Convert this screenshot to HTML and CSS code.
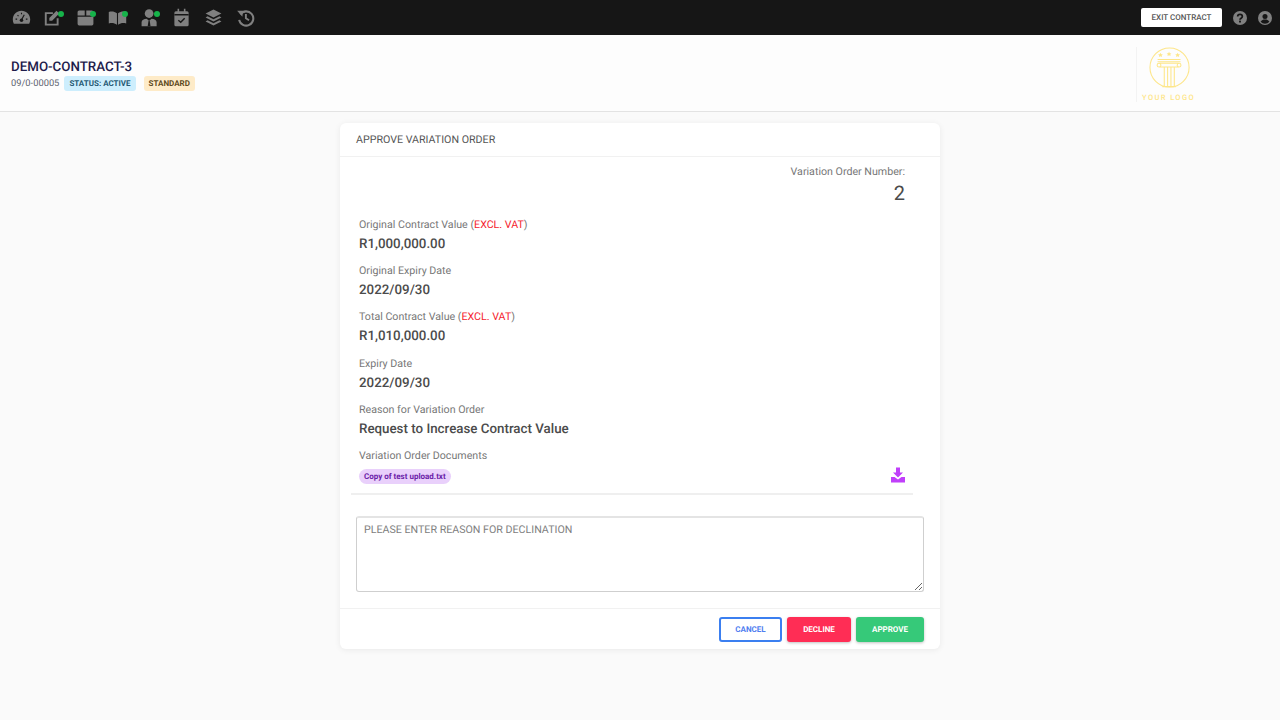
FILE: index.html
```html
<!DOCTYPE html>
<html lang="en">
<head>
<meta charset="utf-8">
<title>Approve Variation Order</title>
<link rel="stylesheet" href="styles.css">
</head>
<body>
<header class="topbar">
  <nav class="nav-icons">
    <span class="nav-icon"><svg viewBox="0 0 24 24" width="19" height="19"><path fill="#808080" d="M12 3.500C5.900 3.500 1 8.400 1 14.500c0 2 .5 3.700 1.300 5.500h19.400c.8-1.800 1.300-3.500 1.300-5.500 0-6.100-4.900-11-11-11z"/><path stroke="#161616" stroke-width="1.400" fill="none" d="M12 15l3.500-6.500M4.500 14h2M17.500 14h2M7 9l1.200 1.200M12 6v2"/><circle cx="12" cy="15.500" r="2.200" fill="#161616"/></svg></span>
    <span class="nav-icon dot"><svg class="shift" viewBox="0 0 24 24" width="19" height="19"><path fill="none" stroke="#808080" stroke-width="2.400" d="M18.500 13v8H3.500V6.500h9"/><path fill="#808080" d="M8 12.500L17 3.500l3.500 3.500-9 9H8z"/></svg></span>
    <span class="nav-icon dot"><svg viewBox="0 0 24 24" width="19" height="19"><path fill="#808080" d="M2 5a2 2 0 0 1 2-2h7v6.500H2zM13 3h7a2 2 0 0 1 2 2v4.500h-9zM2 11h20v9a2 2 0 0 1-2 2H4a2 2 0 0 1-2-2z"/></svg></span>
    <span class="nav-icon dot"><svg viewBox="0 0 24 24" width="19" height="19"><path fill="#808080" d="M1 5c4-1 7-.5 10.300 1.500V21C8 19 5 18.500 1 19.500zM12.700 6.500C16 4.500 19 4 23 5v14.500c-4-1-7-.5-10.300 1.500z"/></svg></span>
    <span class="nav-icon dot"><svg viewBox="0 0 24 24" width="19" height="19"><circle cx="11.500" cy="7" r="5.500" fill="#808080"/><path fill="#808080" d="M2 23v-5c0-3 3-4.500 6.500-4.500l3 3 3-3c3.500 0 6.500 1.500 6.500 4.500v5z"/><path fill="#161616" d="M10.700 16.500h1.600l1 6.500h-3.600z"/></svg></span>
    <span class="nav-icon"><svg viewBox="0 0 24 24" width="19" height="19"><path fill="#808080" d="M7 1h2v3h6V1h2v3h2a2 2 0 0 1 2 2v15a2 2 0 0 1-2 2H5a2 2 0 0 1-2-2V6a2 2 0 0 1 2-2h2z"/><path stroke="#161616" stroke-width="1.800" fill="none" d="M3 8.500h18M8 15.500l3 2.500 5-5"/></svg></span>
    <span class="nav-icon"><svg viewBox="0 0 24 24" width="19" height="19"><path fill="#808080" d="M12 2l10 5-10 5L2 7zM4.500 10.500L12 14.300l7.500-3.800L22 12l-10 5-10-5zM4.500 15.500L12 19.300l7.500-3.800L22 17l-10 5-10-5z"/></svg></span>
    <span class="nav-icon"><svg viewBox="0 0 24 24" width="19" height="19"><path fill="none" stroke="#808080" stroke-width="2.600" d="M5.500 8a9 9 0 1 1-1.500 7"/><path fill="#808080" d="M1.500 3.500l7.500 0-1 7.500z"/><path fill="none" stroke="#808080" stroke-width="2.400" d="M12.500 7.500V13l4 2.500"/></svg></span>
  </nav>
  <div class="top-actions">
    <button class="exit-btn" type="button">EXIT CONTRACT</button>
    <svg class="round-icon" viewBox="0 0 24 24" width="14" height="14"><circle cx="12" cy="12" r="12" fill="#808080"/><path fill="none" stroke="#161616" stroke-width="3" d="M8 9.500C8 7 10 5.800 12 5.800s4 1.200 4 3.500c0 3-4 3-4 5.700"/><rect x="10.400" y="16.500" width="3.200" height="3.200" fill="#161616"/></svg>
    <svg class="round-icon" viewBox="0 0 24 24" width="14" height="14"><circle cx="12" cy="12" r="12" fill="#808080"/><circle cx="12" cy="9.500" r="4.300" fill="#161616"/><path fill="#161616" d="M4.500 18.500c1.500-3 4.500-4 7.500-4s6 1 7.500 4a10 10 0 0 1-15 0z"/></svg>
  </div>
</header>

<section class="contract-head">
  <div class="contract-info">
    <h1 class="contract-title">DEMO-CONTRACT-3</h1>
    <div class="contract-meta">
      <span class="contract-no">09/0-00005</span>
      <span class="tag tag-blue">STATUS: ACTIVE</span>
      <span class="tag tag-amber">STANDARD</span>
    </div>
  </div>
  <div class="logo">
    <svg viewBox="0 0 44 44" width="44" height="44" fill="none" stroke="#fde68a" stroke-width="1.100">
      <circle cx="21.500" cy="21.500" r="20.500"/>
      <path d="M9 13h24M9 15.500h24M11 17h20M11 21h20M14 41.500h14"/>
      <circle cx="10.500" cy="19" r="2"/>
      <circle cx="31.500" cy="19" r="2"/>
      <path d="M16 21v20M19.500 21v20M23 21v20M26.500 21v20"/>
      <path fill="#fde68a" stroke="none" d="M12 6l.8 1.500 1.700.2-1.200 1.100.3 1.700-1.600-.8-1.600.8.300-1.700-1.200-1.100 1.700-.2zM21 5l.8 1.500 1.700.2-1.200 1.100.3 1.700-1.600-.8-1.600.8.300-1.700-1.200-1.100 1.700-.2zM30 6l.8 1.500 1.700.2-1.200 1.100.3 1.700-1.600-.8-1.600.8.300-1.700-1.200-1.100 1.700-.2z"/>
    </svg>
    <span class="logo-text">YOUR LOGO</span>
  </div>
</section>

<main class="page">
  <article class="card">
    <header class="card-head">APPROVE VARIATION ORDER</header>
    <div class="card-body">
      <div class="vo-number">
        <span class="vo-label">Variation Order Number:</span>
        <span class="vo-value">2</span>
      </div>
      <div class="fields">
        <div class="field">
          <span class="label">Original Contract Value (<span class="red">EXCL. VAT</span>)</span>
          <span class="value">R1,000,000.00</span>
        </div>
        <div class="field">
          <span class="label">Original Expiry Date</span>
          <span class="value">2022/09/30</span>
        </div>
        <div class="field">
          <span class="label">Total Contract Value (<span class="red">EXCL. VAT</span>)</span>
          <span class="value">R1,010,000.00</span>
        </div>
        <div class="field">
          <span class="label">Expiry Date</span>
          <span class="value">2022/09/30</span>
        </div>
        <div class="field">
          <span class="label">Reason for Variation Order</span>
          <span class="value value-lg">Request to Increase Contract Value</span>
        </div>
        <div class="field docs">
          <span class="label">Variation Order Documents</span>
          <div class="doc-row">
            <span class="doc-pill">Copy of test upload.txt</span>
            <svg class="doc-icon" viewBox="0 0 16 16" width="16" height="16"><path fill="#c03ffa" d="M6 0.500h4v5h3l-5 5-5-5h3zM1 10h3.500l3.500 2.500 3.500-2.500H15v5.500H1z"/></svg>
          </div>
        </div>
      </div>
      <textarea class="reason" placeholder="PLEASE ENTER REASON FOR DECLINATION"></textarea>
    </div>
    <footer class="card-foot">
      <button class="btn btn-cancel" type="button">CANCEL</button>
      <button class="btn btn-decline" type="button">DECLINE</button>
      <button class="btn btn-approve" type="button">APPROVE</button>
    </footer>
  </article>
</main>
</body>
</html>
```
FILE: styles.css
```css
* { box-sizing: border-box; }
html, body { height: 100%; }
body {
  margin: 0;
  background: #fafafa;
  font-family: Roboto, "Liberation Sans", sans-serif;
  color: #4b4b4b;
  overflow: hidden;
  text-rendering: geometricPrecision;
}
.topbar {
  height: 35px;
  background: #161616;
  display: flex;
  align-items: center;
  justify-content: space-between;
  padding: 0 8px 0 11px;
  box-shadow: 0 1px 3px rgba(0,0,0,.2);
}
.nav-icons { display: flex; gap: 12px; align-items: center; }
.nav-icon {
  position: relative;
  width: 20px;
  height: 20px;
  display: flex;
  align-items: center;
  justify-content: center;
}
.nav-icon svg { display: block; }
.nav-icon svg.shift { margin-left: -2px; }
.nav-icon.dot::after {
  content: "";
  position: absolute;
  top: 3px;
  right: -1px;
  width: 6px;
  height: 6px;
  border-radius: 50%;
  background: #16b34a;
}
.top-actions { display: flex; align-items: center; gap: 11px; }
.exit-btn {
  width: 81px;
  height: 19px;
  padding: 0;
  border: 0;
  border-radius: 2px;
  background: #fff;
  color: #555;
  font: 500 8px Roboto, sans-serif;
  text-rendering: geometricPrecision;
}
.round-icon { display: block; }
.contract-head {
  height: 77px;
  background: #fdfdfd;
  border-bottom: 1px solid #e3e3e3;
  display: flex;
  justify-content: space-between;
  padding: 0 84px 0 11px;
}
.contract-title {
  margin: 25px 0 0;
  font-size: 13.330px;
  line-height: 16px;
  font-weight: 500;
  color: #1e1b4b;
}
.contract-meta { display: flex; align-items: center; gap: 5px; }
.contract-no { font-size: 9.330px; color: #5f6472; }
.tag {
  font-size: 8px;
  font-weight: 700;
  height: 15px;
  line-height: 15px;
  padding: 0 5px;
  border-radius: 3px;
}
.tag + .tag { margin-left: 3px; }
.tag-blue { background: #cdeefd; color: #265a74; }
.tag-amber { background: #feebc8; color: #5f4a20; }
.logo {
  margin-top: 12px;
  height: 55px;
  border-left: 1px solid #f3f3f3;
  padding-left: 11px;
  width: 60px;
  display: flex;
  flex-direction: column;
  align-items: flex-start;
}
.logo-text {
  margin: 4px 0 0 -6px;
  font-size: 7.500px;
  font-weight: 500;
  letter-spacing: 1.400px;
  color: #fde68a;
  white-space: nowrap;
}
.page { display: flex; justify-content: center; padding-top: 11px; }
.card {
  width: 600px;
  height: 526px;
  background: #fff;
  border-radius: 6px;
  box-shadow: 0 1px 6px rgba(0,0,0,.07);
  display: flex;
  flex-direction: column;
}
.card-head {
  height: 34px;
  padding: 10px 16px 0;
  font-size: 10.670px;
  line-height: 14px;
  color: #555;
  border-bottom: 1px solid #f1f1f1;
}
.card-body { flex: 1; padding: 8px 16px 0; display: flex; flex-direction: column; }
.vo-number {
  display: flex;
  flex-direction: column;
  align-items: flex-end;
  padding-right: 19px;
}
.vo-label { font-size: 10.670px; line-height: 14px; color: #777; }
.vo-value { font-size: 20px; line-height: 24px; margin-top: 2px; color: #4b4b4b; }
.fields {
  margin: 12.500px 11px 0 -5px;
  padding: 0 8px;
  border-bottom: 2px solid #efefef;
  height: 277.500px;
}
.field { display: flex; flex-direction: column; height: 46.400px; }
.label { font-size: 10.670px; line-height: 14px; color: #777; }
.red { color: #f5222d; }
.value { font-size: 13.330px; line-height: 16px; margin-top: 5px; font-weight: 500; color: #4b4b4b; }
.value-lg { margin-top: 4.500px; }
.doc-row { display: flex; justify-content: space-between; align-items: center; margin: 6px -1px 0 0; }
.doc-pill {
  font-size: 8px;
  font-weight: 700;
  line-height: 15px;
  padding: 0 5px;
  border-radius: 8px;
  background: #e9d0fb;
  color: #6b21a8;
}
.doc-icon { display: block; margin-top: -3px; }
.reason {
  display: block;
  margin: 21px 0 0;
  width: 568px;
  height: 76px;
  padding: 5px 7px;
  border: 1px solid #cfcfcf;
  border-top: 2px solid #e4e4e4;
  border-radius: 3px;
  font: 400 10.670px/14px Roboto, sans-serif;
  color: #808080;
  outline: none;
  text-rendering: geometricPrecision;
}
.reason::placeholder { color: #808080; opacity: 1; }
.card-foot {
  height: 41px;
  border-top: 1px solid #f1f1f1;
  display: flex;
  justify-content: flex-end;
  align-items: flex-start;
  gap: 5px;
  padding: 8px 16px 0;
}
.btn {
  height: 25px;
  padding: 0;
  border: 0;
  border-radius: 3px;
  font: 700 8px Roboto, sans-serif;
  color: #fff;
  box-shadow: 0 1px 3px rgba(0,0,0,.25);
  text-rendering: geometricPrecision;
}
.btn-cancel { width: 63px; background: #fff; color: #4f7ef0; border: 2px solid #3b7ff0; box-shadow: none; }
.btn-decline { width: 64px; background: #ff2d55; }
.btn-approve { width: 68px; background: #36c979; }
```
